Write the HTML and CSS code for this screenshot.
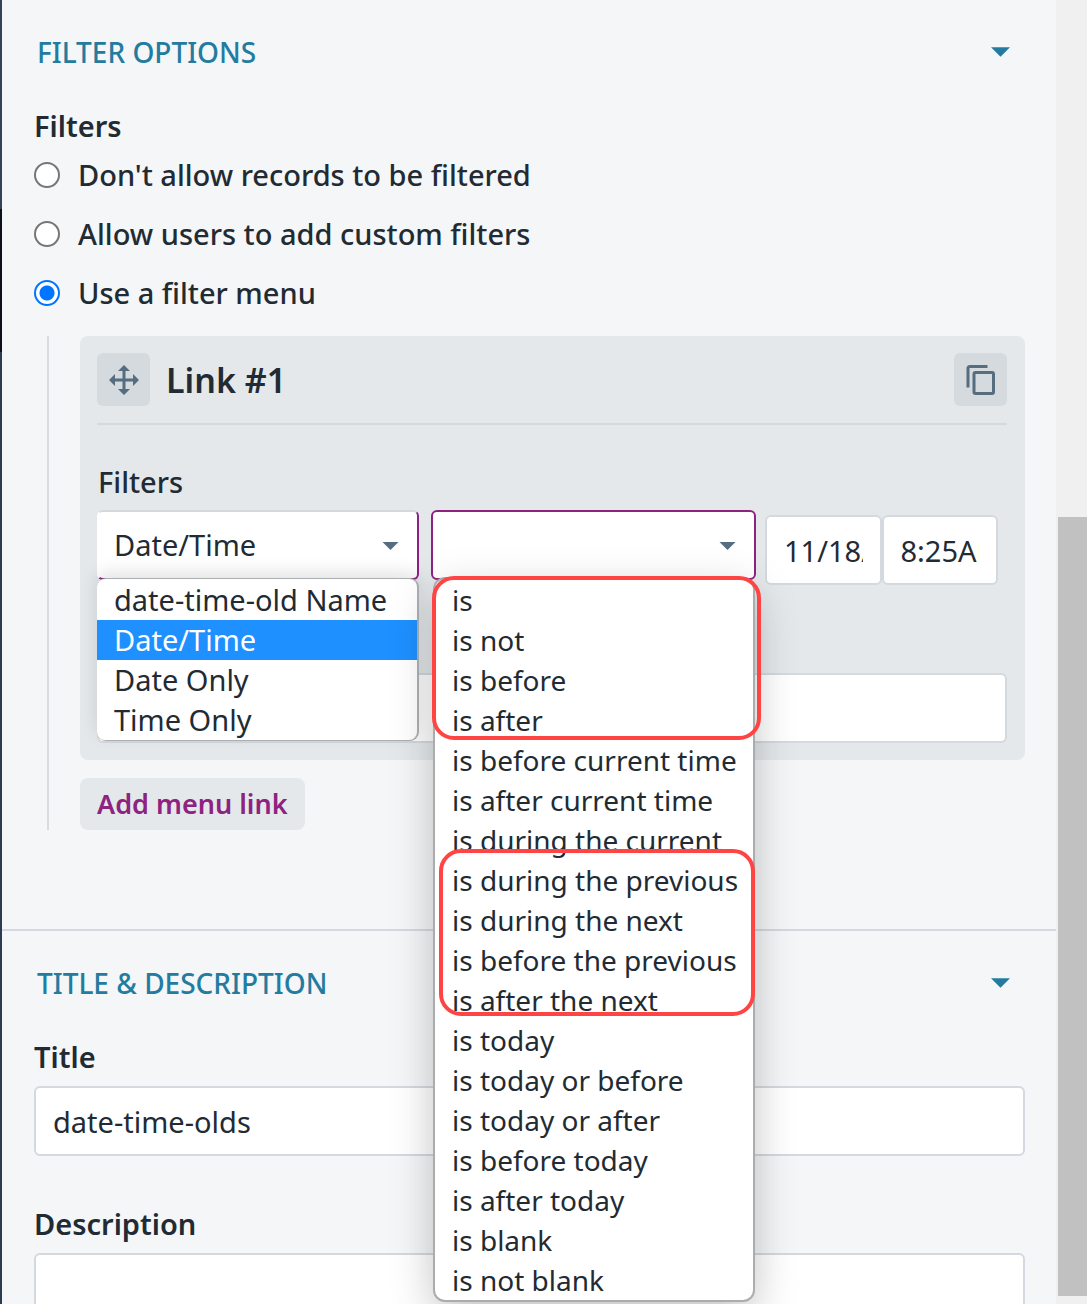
FILE: index.html
```html
<!DOCTYPE html>
<html lang="en">
<head>
<meta charset="utf-8">
<meta name="viewport" content="width=device-width, initial-scale=1">
<title>Filter options</title>
<link rel="stylesheet" href="styles.css">
</head>
<body>
<div class="app">
  <div class="edge"></div>
  <main class="panel">
    <section class="section section-filters">
      <button class="section-head" type="button">
        <span>FILTER OPTIONS</span>
        <svg class="head-caret" viewBox="0 0 20 10" aria-hidden="true"><path d="M0 0h20l-10 10z"/></svg>
      </button>
      <fieldset class="choices">
        <legend class="label">Filters</legend>
        <label class="choice"><input type="radio" name="mode"><span>Don't allow records to be filtered</span></label>
        <label class="choice"><input type="radio" name="mode"><span>Allow users to add custom filters</span></label>
        <label class="choice"><input type="radio" name="mode" checked><span>Use a filter menu</span></label>
      </fieldset>
      <div class="nested">
        <div class="card">
          <header class="card-head">
            <button class="icon-button" type="button" aria-label="Move link">
              <svg viewBox="0 0 30 30" aria-hidden="true"><path d="M15 0l6 6h-4.500v7.500h7.500v-4.500l6 6-6 6v-4.500h-7.500v7.500h4.500l-6 6-6-6h4.500v-7.500h-7.500v4.500l-6-6 6-6v4.500h7.500v-7.500h-4.500z"/></svg>
            </button>
            <h3>Link #1</h3>
            <button class="icon-button" type="button" aria-label="Copy link">
              <svg viewBox="0 0 30 30" aria-hidden="true"><path d="M2 22.500V3.500Q2 1.500 4 1.500H21.500" class="stroke"/><rect x="8" y="7.500" width="19.500" height="21" rx="1.500" class="stroke"/></svg>
            </button>
          </header>
          <div class="sub-label">Filters</div>
          <div class="filter-row">
            <div class="picker">
              <select class="select select-field" aria-label="Filter field"><option>Date/Time</option></select>
              <svg class="caret" viewBox="0 0 16 8" aria-hidden="true"><path d="M0 0h16l-8 8z"/></svg>
              <ul class="popup popup-field" role="listbox" aria-label="Fields">
                <li role="option">date-time-old Name</li>
                <li role="option" aria-selected="true" class="active">Date/Time</li>
                <li role="option">Date Only</li>
                <li role="option">Time Only</li>
              </ul>
            </div>
            <div class="picker">
              <select class="select" aria-label="Operator"><option></option></select>
              <svg class="caret" viewBox="0 0 16 8" aria-hidden="true"><path d="M0 0h16l-8 8z"/></svg>
              <ul class="popup popup-operator" role="listbox" aria-label="Operators">
                <li role="option">is</li>
                <li role="option">is not</li>
                <li role="option">is before</li>
                <li role="option">is after</li>
                <li role="option">is before current time</li>
                <li role="option">is after current time</li>
                <li role="option">is during the current</li>
                <li role="option">is during the previous</li>
                <li role="option">is during the next</li>
                <li role="option">is before the previous</li>
                <li role="option">is after the next</li>
                <li role="option">is today</li>
                <li role="option">is today or before</li>
                <li role="option">is today or after</li>
                <li role="option">is before today</li>
                <li role="option">is after today</li>
                <li role="option">is blank</li>
                <li role="option">is not blank</li>
              </ul>
              <div class="ring ring-first"></div>
              <div class="ring ring-second"></div>
            </div>
            <div class="moment">
              <input class="text-input" type="text" value="11/18/2021" aria-label="Date">
              <input class="text-input" type="text" value="8:25AM" aria-label="Time">
            </div>
          </div>
          <input class="text-input" type="text" aria-label="Link text">
        </div>
        <button class="add-link" type="button">Add menu link</button>
      </div>
    </section>
    <section class="section">
      <button class="section-head" type="button">
        <span>TITLE &amp; DESCRIPTION</span>
        <svg class="head-caret" viewBox="0 0 20 10" aria-hidden="true"><path d="M0 0h20l-10 10z"/></svg>
      </button>
      <div class="field">
        <label class="label" for="title">Title</label>
        <input class="text-input" id="title" type="text" value="date-time-olds">
      </div>
      <div class="field">
        <label class="label" for="description">Description</label>
        <textarea class="text-input area" id="description"></textarea>
      </div>
    </section>
  </main>
  <div class="scrollbar"><div class="thumb"></div></div>
</div>
</body>
</html>
```
FILE: styles.css
```css
* { box-sizing: border-box; }

body {
  margin: 0;
  font-family: "Noto Sans", sans-serif;
  font-size: 29px;
  line-height: 40px;
  color: #222b33;
  background: #f4f6f8;
}

button, input, select, textarea { font: inherit; color: inherit; margin: 0; }

.app { display: flex; height: 100vh; overflow: hidden; }

.edge {
  flex: 0 0 2px;
  background: linear-gradient(#34425a 0 16%, #0c1119 16% 27%, #2c3b50 27%);
}

.panel { flex: 1; min-width: 0; }

.section { padding: 32px 31px 0 32px; }
.section-filters { border-bottom: 2px solid #d3d9de; padding-bottom: 99px; }

.section-head {
  display: flex;
  align-items: center;
  justify-content: space-between;
  width: 100%;
  padding: 0 15px 0 3px;
  border: 0;
  background: none;
  color: #237c9f;
  font-size: 28px;
  font-weight: 500;
  text-align: left;
}
.head-caret { width: 19px; height: 10px; fill: currentColor; }

.label { display: block; padding: 0; font-weight: 600; }

.choices { margin: 0; padding: 34px 0 0; border: 0; }
.choices legend { float: left; width: 100%; margin-bottom: 9px; }
.choice {
  display: flex;
  clear: both;
  align-items: center;
  gap: 18px;
  margin-bottom: 19px;
  font-weight: 500;
}
.choice input {
  appearance: none;
  width: 26px;
  height: 26px;
  border: 2px solid #767676;
  border-radius: 50%;
  background: #fff;
}
.choice input:checked {
  border-color: #0075ff;
  background: radial-gradient(circle, #0075ff 7px, #fff 8px);
}

.nested {
  margin: 4px 0 0 13px;
  padding-left: 31px;
  border-left: 2px solid #d8dcdf;
}

.card { padding: 17px 18px 17px 17px; border-radius: 8px; background: #e4e8eb; }
.card-head {
  display: flex;
  align-items: center;
  gap: 16px;
  padding-bottom: 17px;
  border-bottom: 2px solid #d3d9dd;
}
.card-head h3 { flex: 1; margin: 0; font-size: 34px; font-weight: 600; }
.icon-button {
  display: grid;
  place-items: center;
  width: 53px;
  height: 53px;
  padding: 0;
  border: 0;
  border-radius: 6px;
  background: #d5dade;
}
.icon-button svg { width: 30px; height: 30px; fill: #566d80; }
.icon-button .stroke { fill: none; stroke: #566d80; stroke-width: 3; }

.sub-label { padding: 37px 0 8px 1px; font-weight: 500; }

.filter-row {
  display: grid;
  grid-template-columns: 322fr 325fr 230fr;
  gap: 12px;
  align-items: start;
  margin-bottom: 88px;
  padding-right: 9px;
}
.picker { position: relative; }
.select {
  display: block;
  appearance: none;
  width: 100%;
  height: 70px;
  padding: 0 15px;
  border: 2px solid #8e2280;
  border-radius: 6px;
  background: #fff;
}
.select-field { border-top-color: #d3d9dd; border-left-color: #fff; }
.caret {
  position: absolute;
  top: 32px;
  right: 20px;
  width: 17px;
  height: 8px;
  fill: #566d80;
}

.popup {
  position: absolute;
  z-index: 2;
  top: 69px;
  left: 0;
  width: 320px;
  margin: 0;
  padding: 1px 0 0;
  list-style: none;
  background: #fff;
}
.popup li { padding: 0 17px; white-space: nowrap; }
.popup .active { background: #1e90ff; color: #fff; }
.popup-field { border-radius: 8px; box-shadow: 1px 0 0 1px #adb0b2, 0 -6px 18px rgba(0, 0, 0, 0.12); }
.popup-operator {
  left: 4px;
  width: 318px;
  border-radius: 10px;
  box-shadow: 0 0 0 2px #aaacad, 0 14px 44px rgba(0, 0, 0, 0.26);
  font-size: 28px;
}

.ring {
  position: absolute;
  z-index: 3;
  border: 4px solid #ff4444;
  border-radius: 22px;
  pointer-events: none;
}
.ring-first { top: 66px; left: 1px; width: 329px; height: 164px; }
.ring-second { top: 339px; left: 8px; width: 316px; height: 167px; }

.moment { display: flex; margin-left: -3px; padding-top: 5px; }
.moment .text-input { flex: 1; min-width: 0; }

.text-input {
  display: block;
  width: 100%;
  height: 70px;
  padding: 0 17px;
  border: 2px solid #d3d9de;
  border-radius: 6px;
  background: #fff;
}

.add-link {
  display: block;
  margin-top: 18px;
  padding: 6px 17px;
  border: 0;
  border-radius: 8px;
  background: #e4e8eb;
  color: #8e2280;
  font-size: 27px;
  font-weight: 600;
}

.field { padding-top: 34px; }
.field + .field { padding-top: 48px; }
.field .label { margin-bottom: 9px; }
.area { height: 140px; resize: none; }

.scrollbar {
  flex: 0 0 31px;
  padding: 517px 0 8px 2px;
  background: #f0f0f0;
}
.thumb { height: 100%; background: #c1c1c1; }
```
